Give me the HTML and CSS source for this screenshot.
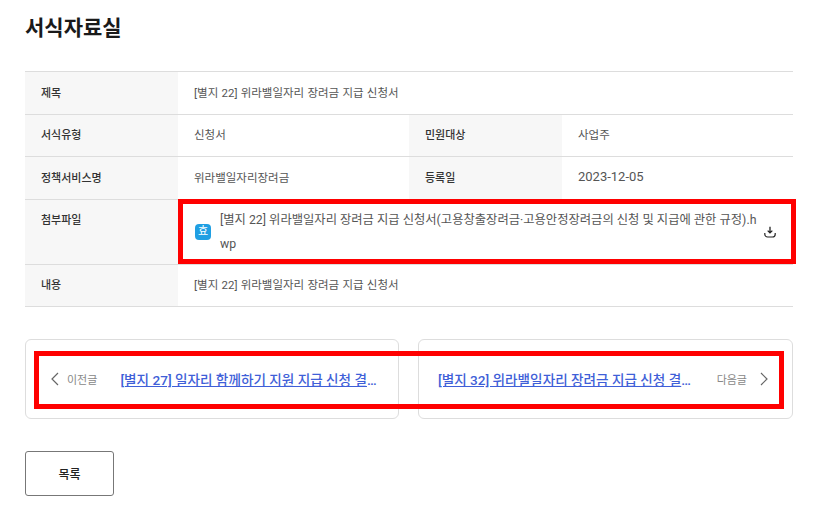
FILE: index.html
```html
<!DOCTYPE html>
<html lang="ko">
<head>
    <title>서식자료실</title>
    <link rel="stylesheet" href="styles.css">
</head>
<body>
    <div class="container">
        <h1>서식자료실</h1>

        <div class="detail">
            <div class="row row-title">
                <div class="label">제목</div>
                <div class="value">[별지 22] 위라밸일자리 장려금 지급 신청서</div>
            </div>
            <div class="row row-half">
                <div class="label">서식유형</div>
                <div class="value">신청서</div>
                <div class="label">민원대상</div>
                <div class="value">사업주</div>
            </div>
            <div class="row row-half">
                <div class="label">정책서비스명</div>
                <div class="value">위라밸일자리장려금</div>
                <div class="label">등록일</div>
                <div class="value date">2023-12-05</div>
            </div>
            <div class="row row-file">
                <div class="label">첨부파일</div>
                <div class="value file">
                    <span class="file-icon">효</span>
                    <span class="file-name">[별지 22] 위라밸일자리 장려금 지급 신청서(고용창출장려금·고용안정장려금의 신청 및 지급에 관한 규정).hwp</span>
                    <svg class="download" viewBox="0 0 12 12">
                        <path d="M6 .8v6M3.7 4.6 6 6.9l2.3-2.3" fill="none" stroke="#222" stroke-width="1.3"/>
                        <path d="M.8 7v1.2a2.8 2.8 0 0 0 2.8 2.8h4.8a2.8 2.8 0 0 0 2.8-2.8V7" fill="none" stroke="#222" stroke-width="1.2"/>
                    </svg>
                </div>
            </div>
            <div class="row row-title">
                <div class="label">내용</div>
                <div class="value">[별지 22] 위라밸일자리 장려금 지급 신청서</div>
            </div>
            <div class="mark mark-file"></div>
        </div>

        <div class="pager">
            <div class="pager-card pager-prev">
                <svg class="arrow" viewBox="0 0 8 14"><path d="M7 1 1 7l6 6" fill="none" stroke="#666" stroke-width="1.2"/></svg>
                <span class="pager-label">이전글</span>
                <a class="pager-link" href="#">[별지 27] 일자리 함께하기 지원 지급 신청 결과 통지서</a>
            </div>
            <div class="pager-card pager-next">
                <a class="pager-link" href="#">[별지 32] 위라밸일자리 장려금 지급 신청 결과 통지서</a>
                <span class="pager-label">다음글</span>
                <svg class="arrow" viewBox="0 0 8 14"><path d="M1 1l6 6-6 6" fill="none" stroke="#666" stroke-width="1.2"/></svg>
            </div>
            <div class="mark mark-pager"></div>
        </div>

        <button class="list-button">목록</button>
    </div>
</body>
</html>
```

FILE: styles.css
```css
body {
    margin: 0;
    background-color: #fff;
    color: #222;
    font-family: Roboto, "Noto Sans CJK KR", sans-serif;
}
.container {
    padding: 12px 32px 0 25px;
}
h1 {
    margin: 0 0 26px;
    font-size: 21px;
    line-height: 33px;
    font-weight: 700;
    color: #1a1a1a;
}

/* Detail table */
.detail {
    position: relative;
    border-top: 1px solid #ddd;
}
.row {
    display: grid;
    border-bottom: 1px solid #ddd;
    font-size: 11.5px;
}
.row-title {
    grid-template-columns: 153px 1fr;
    height: 41.5px;
}
.row-half {
    grid-template-columns: 153px 231px 153px 1fr;
    height: 41.5px;
}
.row-file {
    grid-template-columns: 153px 1fr;
    height: 64px;
}
.label {
    display: flex;
    align-items: center;
    padding: 0 0 2px 16px;
    background-color: #f7f7f7;
    font-size: 11px;
    font-weight: 500;
    color: #333;
}
.value {
    display: flex;
    align-items: center;
    padding: 0 0 2px 16px;
    color: #555;
    word-spacing: 0.4px;
}
.date {
    font-size: 13px;
}
.row-file .label {
    align-items: flex-start;
    padding-top: 11px;
}
.file {
    gap: 9px;
    padding: 0 17px 0 17px;
    word-spacing: 0;
}
.file-icon {
    flex: none;
    width: 16px;
    height: 16px;
    border-radius: 4px;
    background-color: #1f9fe3;
    color: #fff;
    font-size: 11px;
    line-height: 16px;
    text-align: center;
}
.file-name {
    flex: 1;
    font-size: 12.3px;
    line-height: 24px;
    word-break: break-all;
}
.download {
    flex: none;
    width: 12px;
    height: 12px;
    margin-left: -4px;
}

/* Prev / next */
.pager {
    position: relative;
    display: grid;
    grid-template-columns: 374px 375px;
    gap: 19px;
    margin-top: 32px;
}
.pager-card {
    display: flex;
    align-items: center;
    box-sizing: border-box;
    height: 80px;
    border: 1px solid #ddd;
    border-radius: 6px;
    font-size: 13.6px;
}
.pager-prev {
    padding: 0 20px 0 25px;
}
.pager-next {
    padding: 0 24px 0 19px;
}
.arrow {
    flex: none;
    width: 8px;
    height: 14px;
}
.pager-label {
    flex: none;
    font-size: 11px;
    color: #888;
}
.pager-prev .pager-label {
    margin: 0 23px 0 8px;
}
.pager-next .pager-label {
    margin: 0 13px 0 24px;
}
.pager-link {
    flex: 1;
    min-width: 0;
    overflow: hidden;
    white-space: nowrap;
    text-overflow: ellipsis;
    color: #3f5fd8;
    font-weight: 500;
    text-decoration: underline;
}

/* Red highlight boxes drawn over the page */
.mark {
    position: absolute;
    box-sizing: border-box;
    border: 5px solid #f00;
}
.mark-file {
    top: 127px;
    left: 153px;
    width: 618px;
    height: 65px;
}
.mark-pager {
    top: 12px;
    left: 9px;
    width: 750px;
    height: 58px;
}

.list-button {
    display: block;
    width: 89px;
    height: 45px;
    margin-top: 32px;
    padding: 0;
    border: 1px solid #777;
    border-radius: 3px;
    background-color: #fff;
    color: #222;
    font-family: inherit;
    font-size: 12px;
    font-weight: 500;
}
```
